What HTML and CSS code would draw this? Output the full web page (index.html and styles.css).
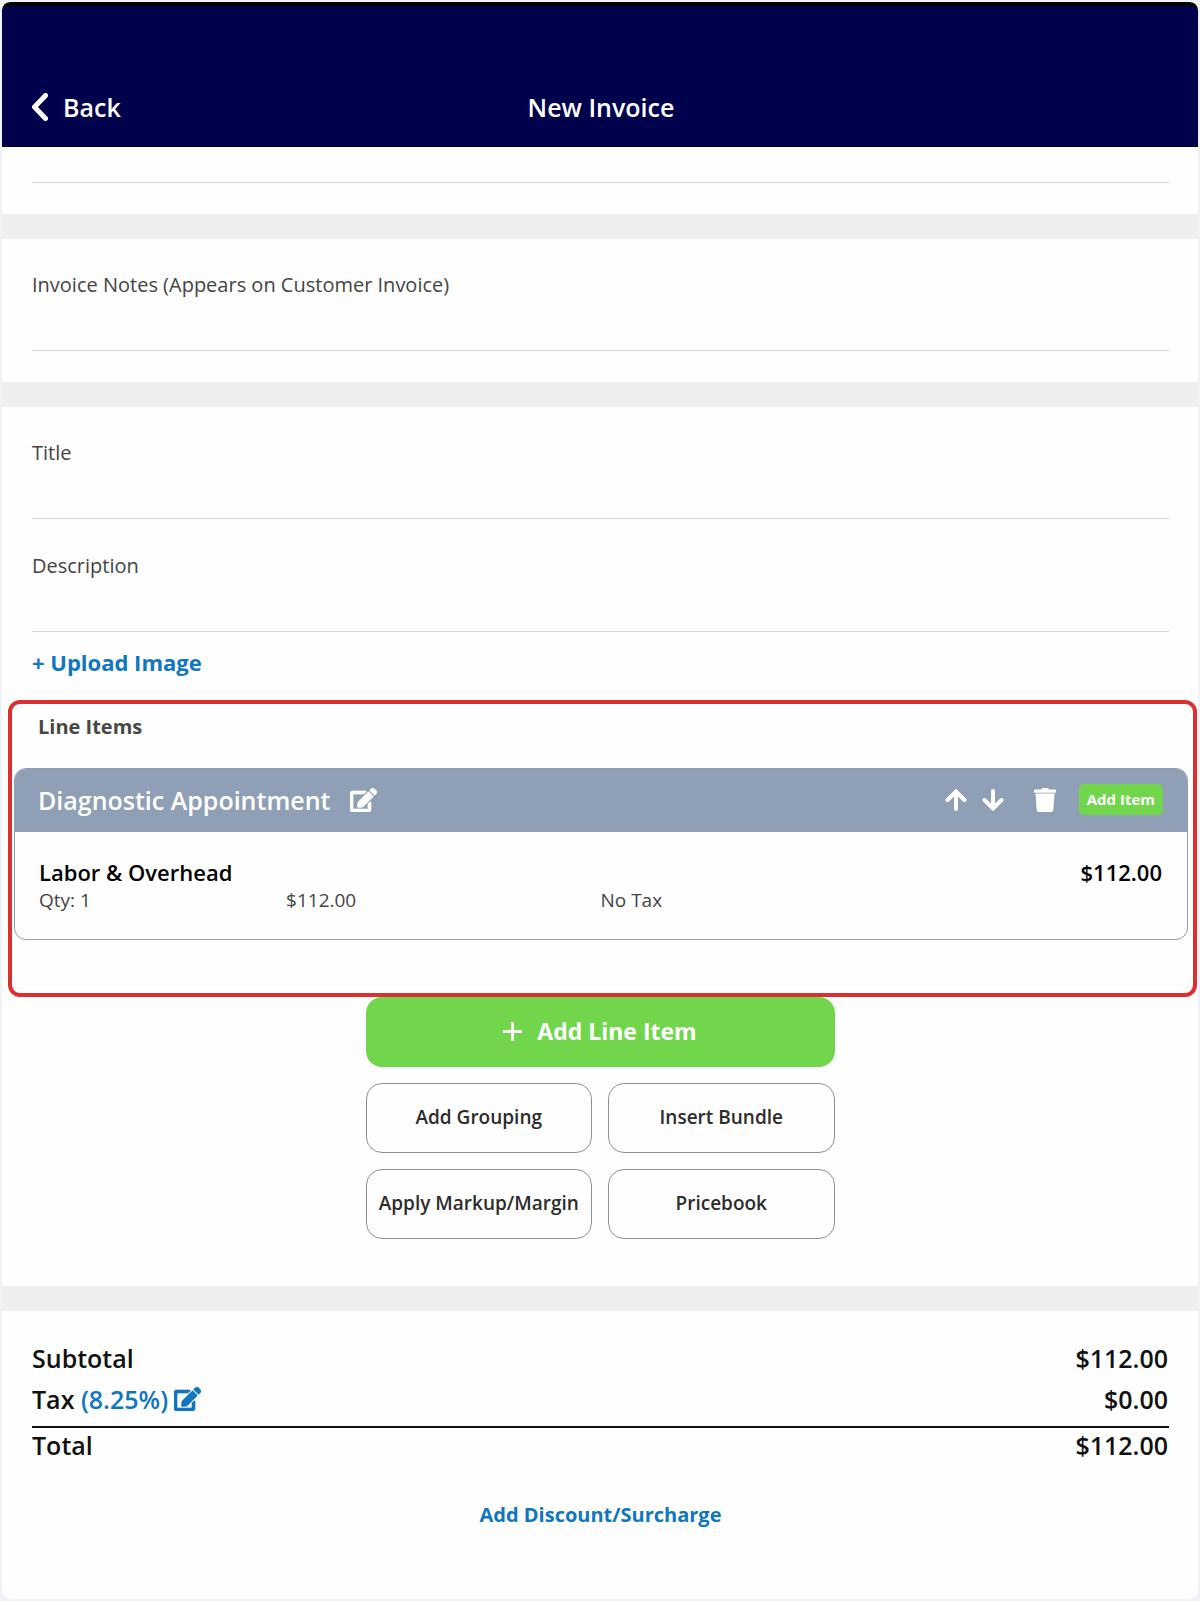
FILE: index.html
```html
<!DOCTYPE html>
<html lang="en">
<head>
  <meta charset="utf-8">
  <meta name="viewport" content="width=device-width, initial-scale=1">
  <title>New Invoice</title>
  <link rel="stylesheet" href="styles.css">
</head>
<body>
  <svg class="sprite" aria-hidden="true">
    <symbol id="icon-edit" viewBox="0 0 576 512">
      <path d="M402.600 83.200l90.200 90.200c3.800 3.800 3.800 10 0 13.800L274.400 405.600l-92.800 10.300c-12.400 1.400-22.900-9.100-21.500-21.500l10.300-92.800L388.800 83.200c3.800-3.800 10-3.800 13.800 0zm162-22.900l-48.800-48.800c-15.200-15.200-39.900-15.200-55.200 0l-35.400 35.400c-3.800 3.800-3.800 10 0 13.800l90.200 90.200c3.800 3.800 10 3.800 13.800 0l35.400-35.400c15.200-15.300 15.200-40 0-55.200zM384 346.200V448H64V128h229.800c3.200 0 6.200-1.300 8.500-3.500l40-40c7.600-7.600 2.200-20.500-8.500-20.500H48C21.500 64 0 85.500 0 112v352c0 26.500 21.500 48 48 48h352c26.500 0 48-21.500 48-48V306.200c0-10.700-12.900-16-20.500-8.500l-40 40c-2.200 2.300-3.500 5.300-3.500 8.500z" stroke="currentColor" stroke-width="14"/>
    </symbol>
  </svg>

  <div class="screen">
    <header class="topbar">
      <button class="back" type="button">
        <svg class="back-icon" viewBox="0 0 16 28" aria-hidden="true"><path d="M13.500 2.500 2.500 14 13.500 25.500"/></svg>
        Back
      </button>
      <h1 class="topbar-title">New Invoice</h1>
    </header>

    <main>
      <section class="panel panel-cut">
        <input class="field-input field-input-short" type="text" aria-label="Invoice details">
      </section>

      <section class="panel">
        <div class="field">
          <label class="field-label" for="notes">Invoice Notes (Appears on Customer Invoice)</label>
          <input class="field-input" id="notes" type="text">
        </div>
      </section>

      <section class="panel panel-items">
        <div class="fields">
          <div class="field">
            <label class="field-label" for="title">Title</label>
            <input class="field-input" id="title" type="text">
          </div>
          <div class="field">
            <label class="field-label" for="description">Description</label>
            <input class="field-input" id="description" type="text">
          </div>
          <button class="text-button upload" type="button">+ Upload Image</button>
        </div>

        <div class="line-items">
          <h2 class="line-items-title">Line Items</h2>
          <article class="group">
            <header class="group-head">
              <h3 class="group-name">Diagnostic Appointment</h3>
              <button class="icon-button" type="button" aria-label="Edit group"><svg class="edit-icon"><use href="#icon-edit"/></svg></button>
              <div class="group-actions">
                <button class="icon-button" type="button" aria-label="Move up">
                  <svg class="arrow-icon" viewBox="0 0 22 22"><path d="M11 20V3M2.500 11 11 2.500 19.500 11"/></svg>
                </button>
                <button class="icon-button" type="button" aria-label="Move down">
                  <svg class="arrow-icon" viewBox="0 0 22 22"><path d="M11 2V19M2.500 11 11 19.500 19.500 11"/></svg>
                </button>
                <button class="icon-button trash" type="button" aria-label="Delete group">
                  <svg class="trash-icon" viewBox="0 0 22 24"><path d="M1 1.500h6L8 0h6l1 1.500h6a1 1 0 0 1 1 1v1.600a.6.6 0 0 1-.6.600H.6A.6.600 0 0 1 0 4.100V2.500a1 1 0 0 1 1-1zM1.500 5.500h19l-1.100 16.300a2.300 2.300 0 0 1-2.300 2.200H4.900a2.300 2.300 0 0 1-2.300-2.200z"/></svg>
                </button>
                <button class="add-item" type="button">Add Item</button>
              </div>
            </header>
            <div class="item">
              <div class="item-main">
                <span>Labor &amp; Overhead</span>
                <span>$112.00</span>
              </div>
              <div class="item-meta">
                <span>Qty: 1</span>
                <span>$112.00</span>
                <span>No Tax</span>
              </div>
            </div>
          </article>
        </div>

        <div class="actions">
          <button class="primary" type="button">
            <svg class="plus-icon" viewBox="0 0 19 19" aria-hidden="true"><path d="M9.500 0v19M0 9.500h19"/></svg>
            Add Line Item
          </button>
          <button class="secondary" type="button">Add Grouping</button>
          <button class="secondary" type="button">Insert Bundle</button>
          <button class="secondary" type="button">Apply Markup/Margin</button>
          <button class="secondary" type="button">Pricebook</button>
        </div>
      </section>

      <section class="panel panel-totals">
        <table class="totals">
          <tbody>
            <tr><th scope="row">Subtotal</th><td>$112.00</td></tr>
            <tr>
              <th scope="row">Tax <button class="tax-edit" type="button">(8.25%)<svg class="edit-icon" aria-hidden="true"><use href="#icon-edit"/></svg></button></th>
              <td>$0.00</td>
            </tr>
          </tbody>
          <tfoot>
            <tr><th scope="row">Total</th><td>$112.00</td></tr>
          </tfoot>
        </table>
        <button class="text-button discount" type="button">Add Discount/Surcharge</button>
      </section>
    </main>
  </div>
</body>
</html>
```
FILE: styles.css
```css
* {
  box-sizing: border-box;
}

body {
  margin: 0;
  background: #f1f1f8;
  color: #111;
  font-family: "Open Sans", "Noto Sans", sans-serif;
}

h1, h2, h3 {
  margin: 0;
}

button {
  margin: 0;
  padding: 0;
  border: 0;
  background: none;
  color: inherit;
  font: inherit;
  cursor: pointer;
}

svg {
  display: block;
  fill: currentColor;
}

.sprite {
  display: none;
}

.screen {
  min-height: 100vh;
  overflow: hidden;
  border: 2px solid #f1f1f8;
  border-radius: 10px;
  background: #fefefe;
}

/* Top bar */
.topbar {
  display: grid;
  grid-template-columns: 1fr auto 1fr;
  align-items: center;
  padding: 84px 28px 22px 30px;
  border-top: 4px solid #000;
  border-bottom: 1px solid #000;
  border-radius: 8px 8px 0 0;
  background: #00014c;
  color: #fff;
  font-size: 25px;
  font-weight: 600;
  line-height: 34px;
}

.topbar-title {
  font-size: inherit;
  font-weight: inherit;
}

.back {
  display: flex;
  align-items: center;
  justify-self: start;
  gap: 15px;
}

.back-icon {
  width: 16px;
  height: 28px;
  fill: none;
  stroke: currentColor;
  stroke-width: 5;
  stroke-linecap: round;
  stroke-linejoin: round;
}

/* Panels and form fields */
.panel {
  padding: 30px 29px 31px 30px;
}

.panel + .panel {
  border-top: 25px solid #eee;
}

.panel-cut {
  padding-top: 0;
}

.panel-items {
  padding: 30px 0 47px;
}

.fields {
  display: grid;
  padding: 0 29px 0 30px;
}

.field + .field {
  margin-top: 31px;
}

.field-label {
  display: block;
  color: #444;
  font-size: 20px;
  line-height: 32px;
}

.field-input {
  display: block;
  width: 100%;
  height: 50px;
  padding: 0;
  border: 0;
  border-bottom: 1px solid #d6d6d6;
  background: transparent;
  color: inherit;
  font: 20px/32px "Open Sans", sans-serif;
}

.field-input-short {
  height: 36px;
}

.text-button {
  color: #0f76bf;
  font-weight: 700;
  line-height: 32px;
}

.upload {
  justify-self: start;
  margin: 14px 0 22px;
  font-size: 22px;
}

/* Line items */
.line-items {
  margin: 0 1px 0 6px;
  padding: 7px 5px 53px 2px;
  border: 4px solid #dc2f2f;
  border-radius: 12px;
}

.line-items-title {
  margin-bottom: 25px;
  padding-left: 24px;
  color: #484848;
  font-size: 20px;
  line-height: 32px;
}

.group {
  overflow: hidden;
  border: 1px solid #8e9db5;
  border-radius: 12px;
}

.group-head {
  display: flex;
  align-items: center;
  gap: 20px;
  min-height: 63px;
  padding: 0 24px 2px 23px;
  background: #8f9fb6;
  color: #fff;
}

.group-name {
  font-size: 25px;
  font-weight: 600;
  line-height: 34px;
}

.edit-icon {
  width: 27px;
  height: 24px;
}

.group-actions {
  display: flex;
  align-items: center;
  gap: 15px;
  margin-left: auto;
}

.arrow-icon {
  width: 22px;
  height: 22px;
  fill: none;
  stroke: currentColor;
  stroke-width: 4;
  stroke-linecap: round;
}

.trash {
  margin: 0 8px 0 15px;
}

.trash-icon {
  width: 22px;
  height: 24px;
}

.add-item {
  padding: 0 8px 1px;
  border-radius: 5px;
  background: #71d64c;
  font-size: 15px;
  font-weight: 700;
  line-height: 30px;
}

.item {
  padding: 25px 25px 26px 24px;
}

.item-main {
  display: flex;
  justify-content: space-between;
  color: #000;
  font-size: 22px;
  font-weight: 600;
  line-height: 30px;
}

.item-meta {
  display: grid;
  grid-template-columns: 22% 28% 1fr;
  color: #444;
  font-size: 19px;
  line-height: 26px;
}

/* Invoice actions */
.actions {
  display: grid;
  grid-template-columns: 1fr 1fr;
  gap: 16px;
  width: 100%;
  max-width: 469px;
  margin: 0 auto;
}

.primary,
.secondary {
  min-height: 70px;
  padding-bottom: 2px;
  border-radius: 16px;
}

.primary {
  display: flex;
  grid-column: 1 / -1;
  align-items: center;
  justify-content: center;
  gap: 15px;
  background: #71d64c;
  color: #fff;
  font-size: 23px;
  font-weight: 700;
}

.plus-icon {
  width: 19px;
  height: 19px;
  stroke: currentColor;
  stroke-width: 3;
}

.secondary {
  border: 1px solid #909090;
  color: #2c2c2c;
  font-size: 19px;
  font-weight: 600;
}

/* Totals */
.panel-totals {
  display: grid;
}

.totals {
  width: 100%;
  border-collapse: collapse;
  font-size: 25px;
  font-weight: 600;
  line-height: 34px;
}

.totals th,
.totals td {
  padding: 0 0 7px;
  font-weight: inherit;
  text-align: left;
}

.totals td {
  padding-right: 1px;
  text-align: right;
}

.totals tbody tr:last-child > * {
  padding-bottom: 10px;
}

.totals tfoot {
  border-top: 2px solid #111;
}

.tax-edit {
  display: inline-flex;
  align-items: center;
  gap: 6px;
  color: #0f76bf;
}

.discount {
  justify-self: center;
  margin-top: 30px;
  font-size: 20px;
}
```
